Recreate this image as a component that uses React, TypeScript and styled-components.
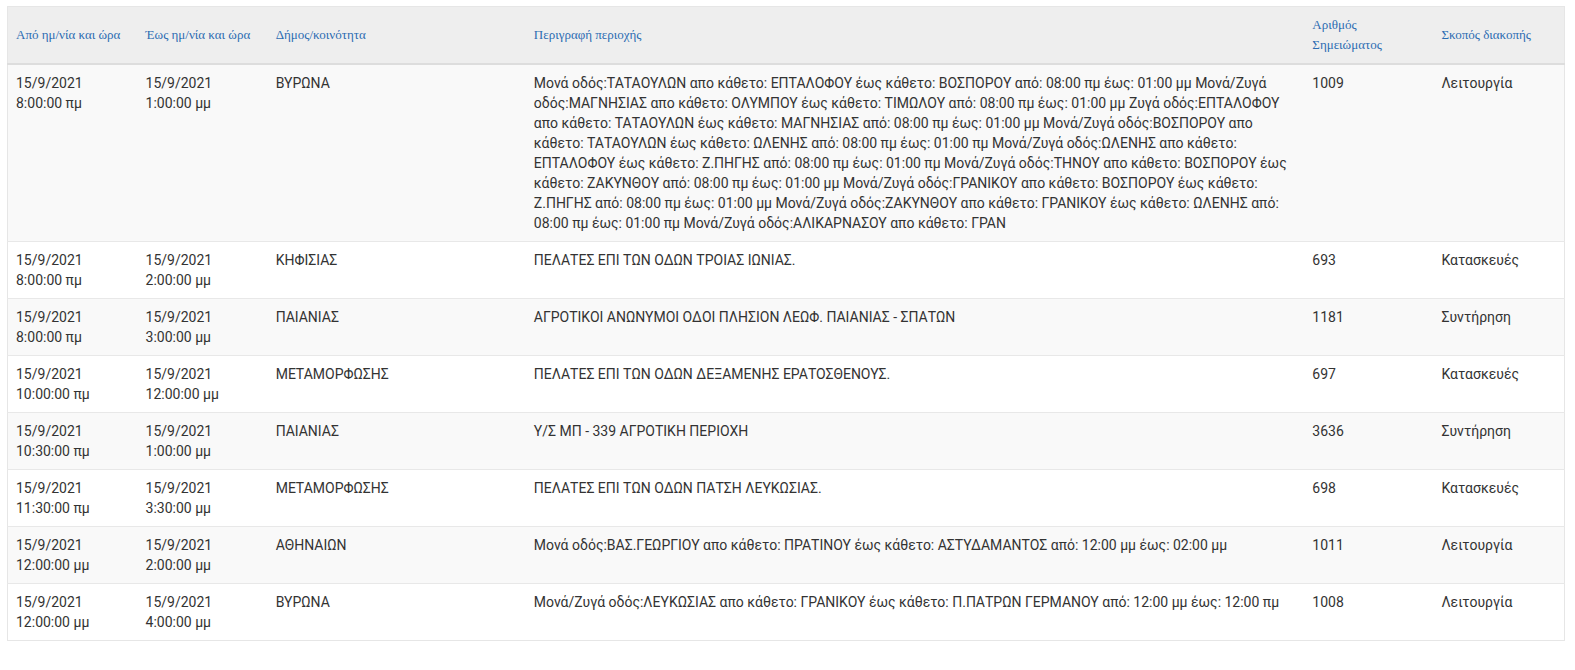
import React from "react";
import styled, { createGlobalStyle } from "styled-components";

const GlobalStyle = createGlobalStyle`
  body {
    margin: 0;
    background: #fff;
    font-family: Roboto, "Noto Sans", sans-serif;
  }
`;

const Page = styled.div`
  padding: 6px 10px 0 7px;
`;

const Table = styled.table`
  width: 1558px;
  table-layout: fixed;
  border-collapse: collapse;
  border: 1px solid #e6e6e6;
`;

const HeadCell = styled.th`
  background: #eeeeee;
  border-bottom: 2px solid #dddddd;
  padding: 8px;
  height: 39px;
  text-align: left;
  vertical-align: middle;
  font-family: "Liberation Serif", "DejaVu Serif", serif;
  font-weight: normal;
  font-size: 13px;
  line-height: 20px;
  color: #2c6cb2;
`;

const Row = styled.tr<{ $striped: boolean }>`
  background: ${(p) => (p.$striped ? "#f9f9f9" : "#ffffff")};
  border-top: 1px solid #e8e8e8;
`;

const Cell = styled.td`
  padding: 8px;
  vertical-align: top;
  font-size: 14px;
  line-height: 20px;
  color: #333333;
`;

type Outage = {
  from: [string, string];
  to: [string, string];
  area: string;
  desc: string;
  note: string;
  reason: string;
};

const rows: Outage[] = [
  {
    from: ["15/9/2021", "8:00:00 πμ"],
    to: ["15/9/2021", "1:00:00 μμ"],
    area: "ΒΥΡΩΝΑ",
    desc:
      "Μονά οδός:ΤΑΤΑΟΥΛΩΝ απο κάθετο: ΕΠΤΑΛΟΦΟΥ έως κάθετο: ΒΟΣΠΟΡΟΥ από: 08:00 πμ έως: 01:00 μμ Μονά/Ζυγά οδός:ΜΑΓΝΗΣΙΑΣ απο κάθετο: ΟΛΥΜΠΟΥ έως κάθετο: ΤΙΜΩΛΟΥ από: 08:00 πμ έως: 01:00 μμ Ζυγά οδός:ΕΠΤΑΛΟΦΟΥ απο κάθετο: ΤΑΤΑΟΥΛΩΝ έως κάθετο: ΜΑΓΝΗΣΙΑΣ από: 08:00 πμ έως: 01:00 μμ Μονά/Ζυγά οδός:ΒΟΣΠΟΡΟΥ απο κάθετο: ΤΑΤΑΟΥΛΩΝ έως κάθετο: ΩΛΕΝΗΣ από: 08:00 πμ έως: 01:00 πμ Μονά/Ζυγά οδός:ΩΛΕΝΗΣ απο κάθετο: ΕΠΤΑΛΟΦΟΥ έως κάθετο: Ζ.ΠΗΓΗΣ από: 08:00 πμ έως: 01:00 πμ Μονά/Ζυγά οδός:ΤΗΝΟΥ απο κάθετο: ΒΟΣΠΟΡΟΥ έως κάθετο: ΖΑΚΥΝΘΟΥ από: 08:00 πμ έως: 01:00 μμ Μονά/Ζυγά οδός:ΓΡΑΝΙΚΟΥ απο κάθετο: ΒΟΣΠΟΡΟΥ έως κάθετο: Ζ.ΠΗΓΗΣ από: 08:00 πμ έως: 01:00 μμ Μονά/Ζυγά οδός:ΖΑΚΥΝΘΟΥ απο κάθετο: ΓΡΑΝΙΚΟΥ έως κάθετο: ΩΛΕΝΗΣ από: 08:00 πμ έως: 01:00 πμ Μονά/Ζυγά οδός:ΑΛΙΚΑΡΝΑΣΟΥ απο κάθετο: ΓΡΑΝ",
    note: "1009",
    reason: "Λειτουργία",
  },
  {
    from: ["15/9/2021", "8:00:00 πμ"],
    to: ["15/9/2021", "2:00:00 μμ"],
    area: "ΚΗΦΙΣΙΑΣ",
    desc: "ΠΕΛΑΤΕΣ ΕΠΙ ΤΩΝ ΟΔΩΝ ΤΡΟΙΑΣ ΙΩΝΙΑΣ.",
    note: "693",
    reason: "Κατασκευές",
  },
  {
    from: ["15/9/2021", "8:00:00 πμ"],
    to: ["15/9/2021", "3:00:00 μμ"],
    area: "ΠΑΙΑΝΙΑΣ",
    desc: "ΑΓΡΟΤΙΚΟΙ ΑΝΩΝΥΜΟΙ ΟΔΟΙ ΠΛΗΣΙΟΝ ΛΕΩΦ. ΠΑΙΑΝΙΑΣ - ΣΠΑΤΩΝ",
    note: "1181",
    reason: "Συντήρηση",
  },
  {
    from: ["15/9/2021", "10:00:00 πμ"],
    to: ["15/9/2021", "12:00:00 μμ"],
    area: "ΜΕΤΑΜΟΡΦΩΣΗΣ",
    desc: "ΠΕΛΑΤΕΣ ΕΠΙ ΤΩΝ ΟΔΩΝ ΔΕΞΑΜΕΝΗΣ ΕΡΑΤΟΣΘΕΝΟΥΣ.",
    note: "697",
    reason: "Κατασκευές",
  },
  {
    from: ["15/9/2021", "10:30:00 πμ"],
    to: ["15/9/2021", "1:00:00 μμ"],
    area: "ΠΑΙΑΝΙΑΣ",
    desc: "Υ/Σ ΜΠ - 339 ΑΓΡΟΤΙΚΗ ΠΕΡΙΟΧΗ",
    note: "3636",
    reason: "Συντήρηση",
  },
  {
    from: ["15/9/2021", "11:30:00 πμ"],
    to: ["15/9/2021", "3:30:00 μμ"],
    area: "ΜΕΤΑΜΟΡΦΩΣΗΣ",
    desc: "ΠΕΛΑΤΕΣ ΕΠΙ ΤΩΝ ΟΔΩΝ ΠΑΤΣΗ ΛΕΥΚΩΣΙΑΣ.",
    note: "698",
    reason: "Κατασκευές",
  },
  {
    from: ["15/9/2021", "12:00:00 μμ"],
    to: ["15/9/2021", "2:00:00 μμ"],
    area: "ΑΘΗΝΑΙΩΝ",
    desc: "Μονά οδός:ΒΑΣ.ΓΕΩΡΓΙΟΥ απο κάθετο: ΠΡΑΤΙΝΟΥ έως κάθετο: ΑΣΤΥΔΑΜΑΝΤΟΣ από: 12:00 μμ έως: 02:00 μμ",
    note: "1011",
    reason: "Λειτουργία",
  },
  {
    from: ["15/9/2021", "12:00:00 μμ"],
    to: ["15/9/2021", "4:00:00 μμ"],
    area: "ΒΥΡΩΝΑ",
    desc: "Μονά/Ζυγά οδός:ΛΕΥΚΩΣΙΑΣ απο κάθετο: ΓΡΑΝΙΚΟΥ έως κάθετο: Π.ΠΑΤΡΩΝ ΓΕΡΜΑΝΟΥ από: 12:00 μμ έως: 12:00 πμ",
    note: "1008",
    reason: "Λειτουργία",
  },
];

const columns = [
  { title: "Από ημ/νία και ώρα", width: 130 },
  { title: "Έως ημ/νία και ώρα", width: 130 },
  { title: "Δήμος/κοινότητα", width: 258 },
  { title: "Περιγραφή περιοχής", width: 778 },
  { title: "Αριθμός Σημειώματος", width: 129 },
  { title: "Σκοπός διακοπής", width: 131 },
];

export default function App() {
  return (
    <>
      <GlobalStyle />
      <Page>
        <Table>
          <colgroup>
            {columns.map((c) => (
              <col key={c.title} style={{ width: c.width }} />
            ))}
          </colgroup>
          <thead>
            <tr>
              {columns.map((c) => (
                <HeadCell key={c.title}>{c.title}</HeadCell>
              ))}
            </tr>
          </thead>
          <tbody>
            {rows.map((r, i) => (
              <Row key={i} $striped={i % 2 === 0}>
                <Cell>
                  {r.from[0]}
                  <br />
                  {r.from[1]}
                </Cell>
                <Cell>
                  {r.to[0]}
                  <br />
                  {r.to[1]}
                </Cell>
                <Cell>{r.area}</Cell>
                <Cell>{r.desc}</Cell>
                <Cell>{r.note}</Cell>
                <Cell>{r.reason}</Cell>
              </Row>
            ))}
          </tbody>
        </Table>
      </Page>
    </>
  );
}
